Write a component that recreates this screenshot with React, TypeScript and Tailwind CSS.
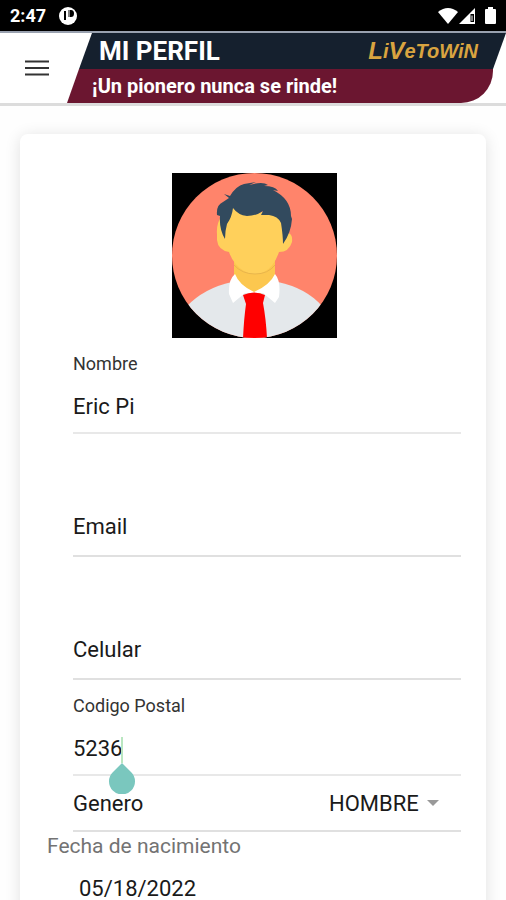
import { useState } from "react";

const StatusBar = () => (
  <div className="flex h-[33px] shrink-0 items-center justify-between border-b-2 border-gray-400 bg-black px-2 text-white">
    <div className="flex items-center gap-3 pl-[2px]">
      <span className="text-lg font-bold">2:47</span>
      <svg viewBox="0 0 20 20" className="h-5 w-5">
        <circle cx="10" cy="10" r="9" fill="white" />
        <path
          d="M7 5v9M11 5v5h2q2 0 2-2.500T13 5z"
          fill="black"
          stroke="black"
          strokeWidth="2"
        />
        <path d="M11 3v12" stroke="white" strokeWidth="1" />
      </svg>
    </div>
    <svg viewBox="0 0 60 20" className="h-5 w-15" fill="white">
      <path d="M0 6Q10 -2 20 6L10 18Z" />
      <path d="M37 2V18H21Z" />
      <path d="M32.500 8H36V16H32.500Z" fill="black" />
      <path d="M34 9.500V15" stroke="white" strokeWidth="1" />
      <path d="M48 3h2V1h5v2h2q1 0 1 1v13q0 1-1 1h-9q-1 0-1-1V4q0-1 1-1z" />
    </svg>
  </div>
);

const Wordmark = () => (
  <span className="flex items-center font-['Liberation_Sans',sans-serif] text-xl leading-none font-bold text-[#d9a440] italic">
    <span className="text-2xl leading-none">L</span>
    <span>i</span>
    <span className="text-2xl leading-none">V</span>
    <span>e</span>
    <span>ToWiN</span>
  </span>
);

const Header = () => (
  <header className="flex h-[73px] shrink-0 border-b-3 border-[#dcdcdc] bg-white">
    <button type="button" aria-label="Menu" className="w-[67px] pl-[25px]">
      <svg viewBox="0 0 24 16" className="h-4 w-6" stroke="#333" strokeWidth="2">
        <path d="M0 1.500h24M0 8h24M0 14.500h24" />
      </svg>
    </button>
    <div className="flex flex-1 flex-col text-white">
      <div className="flex h-9 shrink-0 items-center justify-between bg-[#15202e] pr-7 pl-8 [clip-path:polygon(25px_0,100%_0,calc(100%-13px)_100%,12px_100%)]">
        <h1 className="text-[26px] leading-none font-bold">MI PERFIL</h1>
        <Wordmark />
      </div>
      <div className="mr-[13px] flex flex-1 items-center rounded-br-[32px] bg-[#6b1630] pl-[25px] [clip-path:polygon(12px_0,100%_0,100%_100%,0_100%)]">
        <p className="text-xl leading-none font-bold">
          ¡Un pionero nunca se rinde!
        </p>
      </div>
    </div>
  </header>
);

const Avatar = () => (
  <svg
    viewBox="0 0 165 165"
    role="img"
    aria-label="Foto de perfil"
    className="mx-auto h-[165px] w-[165px]"
  >
    <defs>
      <clipPath id="avatar-circle">
        <circle cx="82.500" cy="82.500" r="82.500" />
      </clipPath>
    </defs>
    <rect width="165" height="165" fill="black" />
    <g clipPath="url(#avatar-circle)">
      <rect width="165" height="165" fill="#ff846b" />
      <path
        d="M14 134Q32 115 60 109H106Q134 115 150 133V165H14Z"
        fill="#e4e8eb"
      />
      <path d="M62 88H103V112L83 124L62 110Z" fill="#fcc74f" />
      <path
        d="M45 61Q44 51 50 42Q54 35 60 34Q74 45 90 39Q105 37 111 47Q110 55 114 60Q121 59 120 69Q117 79 107 79Q102 94 92 99Q82 104 72 98Q61 91 57 79Q46 77 45 67Z"
        fill="#ffd05b"
      />
      <path
        d="M62 92Q70 101 83 101Q96 101 103 92"
        fill="none"
        stroke="#e8b54c"
        strokeWidth="1"
      />
      <path
        d="M53 66Q47 56 48 43L45 42Q44 32 51 29L57 25L52 21L58 23Q64 13 72 11L84 9L77 12Q91 8 96 12L92 13Q103 13 106 18L101 17Q119 26 119 43L120 46Q119 60 111 71Q111 63 109 50Q106 43 97 42L89 42L91 38Q84 43 75 43Q66 42 61 35Q60 44 55 51Q53 58 53 66Z"
        fill="#324a5e"
      />
      <path
        d="M63 101Q67 112 82 119Q98 112 103 101Q109 108 107 124L103 130L91 120H73L61 130L57 121Q56 107 63 101Z"
        fill="white"
      />
      <path
        d="M71 122Q82 117 93 122L91 130Q94 146 95 165H71Q72 145 74 131Z"
        fill="#ff0000"
      />
    </g>
  </svg>
);

type FieldProps = {
  id: string;
  label: string;
  value: string;
  onChange: (value: string) => void;
};

const StackedField = ({
  id,
  label,
  value,
  onChange,
  children,
}: FieldProps & { children?: React.ReactNode }) => (
  <div className="relative h-24 border-b-2 border-[#e8e8e8] pt-3">
    <label htmlFor={id} className="block text-lg leading-7 text-[#333]">
      {label}
    </label>
    <input
      id={id}
      value={value}
      onChange={(e) => onChange(e.target.value)}
      className="mt-3 block h-8 w-full text-[22px] outline-none"
    />
    {children}
  </div>
);

const FloatingField = ({ id, label, value, onChange }: FieldProps) => (
  <div className="flex h-[123px] flex-col justify-end border-b-2 border-[#e0e0e0] pb-3">
    <label htmlFor={id} className="text-[22px] leading-8">
      {label}
    </label>
    <input
      id={id}
      value={value}
      onChange={(e) => onChange(e.target.value)}
      className="h-0 w-full outline-none"
    />
  </div>
);

const CaretHandle = () => (
  <div className="pointer-events-none absolute top-[57px] left-9 flex w-[26px] flex-col items-center">
    <div className="h-[26px] w-[2px] bg-[#b9e6c0]" />
    <svg viewBox="0 0 26 31" className="h-[31px] w-[26px]" fill="#7ac7be">
      <path d="M13 0L22 9A13 13 0 1 1 4 9Z" />
    </svg>
  </div>
);

export default function App() {
  const [name, setName] = useState("Eric Pi");
  const [email, setEmail] = useState("");
  const [phone, setPhone] = useState("");
  const [postalCode, setPostalCode] = useState("5236");
  const [gender, setGender] = useState("HOMBRE");
  const [birthDate, setBirthDate] = useState("05/18/2022");

  return (
    <div className="flex h-screen flex-col overflow-hidden bg-[#fefefe] font-[Roboto,sans-serif] text-[#1a1a1a]">
      <StatusBar />
      <Header />
      <main className="flex-1 px-5 pt-7">
        <form className="rounded-lg bg-white pt-[39px] pr-[25px] pb-8 pl-[27px] shadow-[0_2px_16px_rgba(0,0,0,0.12)]">
          <Avatar />
          <div className="pl-[26px]">
            <StackedField
              id="name"
              label="Nombre"
              value={name}
              onChange={setName}
            />
            <FloatingField
              id="email"
              label="Email"
              value={email}
              onChange={setEmail}
            />
            <FloatingField
              id="phone"
              label="Celular"
              value={phone}
              onChange={setPhone}
            />
            <StackedField
              id="postalCode"
              label="Codigo Postal"
              value={postalCode}
              onChange={setPostalCode}
            >
              <CaretHandle />
            </StackedField>
            <div className="flex h-14 items-center justify-between border-b-2 border-[#e0e0e0] pr-[22px]">
              <label htmlFor="gender" className="text-[22px]">
                Genero
              </label>
              <div className="flex items-center gap-2">
                <select
                  id="gender"
                  value={gender}
                  onChange={(e) => setGender(e.target.value)}
                  className="appearance-none text-[22px] outline-none"
                >
                  <option>HOMBRE</option>
                  <option>MUJER</option>
                </select>
                <svg viewBox="0 0 12 6" className="h-[6px] w-3" fill="#999">
                  <path d="M0 0H12L6 6Z" />
                </svg>
              </div>
            </div>
          </div>
          <label
            htmlFor="birthDate"
            className="block text-[21px] leading-7 text-[#737373]"
          >
            Fecha de nacimiento
          </label>
          <input
            id="birthDate"
            value={birthDate}
            onChange={(e) => setBirthDate(e.target.value)}
            className="mt-3 block h-8 w-full pl-8 text-[22px] outline-none"
          />
        </form>
      </main>
    </div>
  );
}
